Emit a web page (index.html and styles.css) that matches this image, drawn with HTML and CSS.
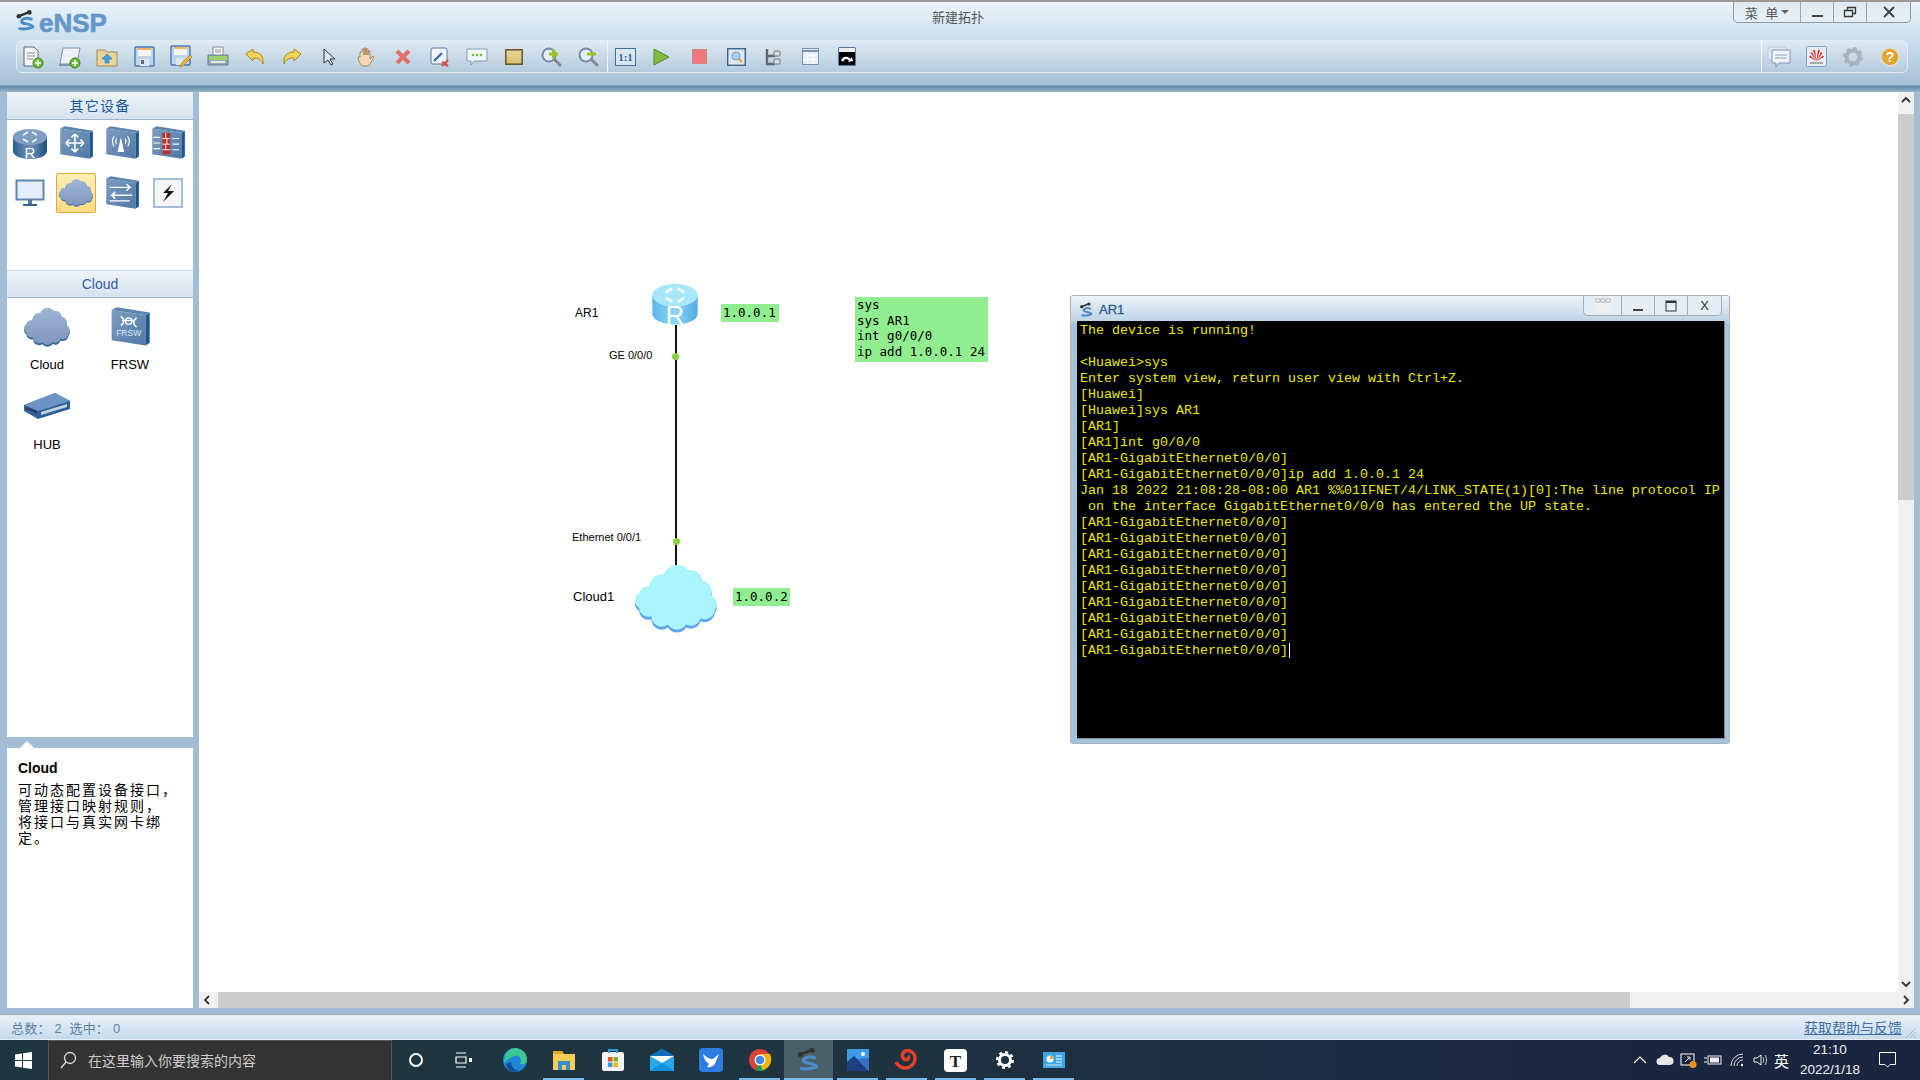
FILE: index.html
```html
<!DOCTYPE html>
<html lang="zh-CN">
<head>
    <meta charset="UTF-8">
    <title>eNSP</title>
    <link rel="stylesheet" href="styles.css">
</head>
<body>
    <svg class="defs" width="0" height="0">
        <defs>
            <linearGradient id="g-body" x1="0" x2="1" y1="0" y2="0"><stop offset="0" stop-color="#2c5f92"/><stop offset=".5" stop-color="#6f93ba"/><stop offset="1" stop-color="#1f4f80"/></linearGradient>
            <linearGradient id="g-face" x1="0" x2="1" y1="0" y2="1"><stop offset="0" stop-color="#7d9cc0"/><stop offset="1" stop-color="#4f79a6"/></linearGradient>
            <linearGradient id="g-cyan" x1="0" x2="1" y1="0" y2="0"><stop offset="0" stop-color="#5fb6ea"/><stop offset=".5" stop-color="#8cd6f8"/><stop offset="1" stop-color="#52abe4"/></linearGradient>
            <linearGradient id="g-cloud" x1="0" x2="0" y1="0" y2="1"><stop offset="0" stop-color="#9fb6d6"/><stop offset="1" stop-color="#7f97bd"/></linearGradient>
            <symbol id="cloud-shape" viewBox="0 0 84 70" preserveAspectRatio="none">
                <path d="M16 24a12 12 0 0 1 14-12a14 14 0 0 1 24-4a12 12 0 0 1 14 10a10 10 0 0 1 8 14a9 9 0 0 1 4 14a10 10 0 0 1-14 8a10 10 0 0 1-14 6a11 11 0 0 1-18 0a10 10 0 0 1-16-8a9 9 0 0 1-12-8a8 8 0 0 1 0-14a8 8 0 0 1 10-6z"/>
            </symbol>
            <symbol id="router-blue" viewBox="0 0 36 32">
                <path d="M1 9v14c0 5 8 8 17 8s17-3 17-8V9z" fill="url(#g-body)"/>
                <ellipse cx="18" cy="9" rx="17" ry="8" fill="#7f9ec2"/>
                <path d="M11 7l5-3M20 4l5 3M25 11l-5 3M16 14l-5-3" stroke="#e8eff6" stroke-width="2"/>
                <text x="18" y="30" font-size="15" text-anchor="middle" fill="#fff" font-family="Liberation Sans">R</text>
            </symbol>
            <symbol id="router-cyan" viewBox="0 0 36 32">
                <path d="M1 9v14c0 5 8 8 17 8s17-3 17-8V9z" fill="url(#g-cyan)"/>
                <ellipse cx="18" cy="9" rx="17" ry="8.5" fill="#a8e6fc"/>
                <path d="M11 7l5-3M20 4l5 3M25 11l-5 3M16 14l-5-3" stroke="#eefbff" stroke-width="2"/>
                <text x="18" y="31" font-size="19" text-anchor="middle" fill="#fff" font-family="Liberation Sans">R</text>
            </symbol>
            <symbol id="box" viewBox="0 0 32 32">
                <path d="M2 3l26 4v23L2 26z" fill="url(#g-face)"/>
                <path d="M28 7l3-2v23l-3 2z" fill="#1d5590"/>
                <path d="M2 3l4-2 25 4-3 2z" fill="#5d85ae"/>
            </symbol>
            <symbol id="ensp-logo" viewBox="0 0 24 24">
                <path d="M4 7l10-4" stroke="#333" stroke-width="2.5" stroke-linecap="round"/>
                <circle cx="4" cy="7" r="2.4" fill="#333"/><circle cx="15" cy="3" r="2.4" fill="#333"/>
                <path d="M17 10c-5-2-11 0-10 3s9 1 10 4-7 4-12 3" fill="none" stroke="#4d8ccb" stroke-width="3" stroke-linecap="round"/>
                <circle cx="18" cy="18" r="2.2" fill="#4d8ccb"/>
            </symbol>
        </defs>
    </svg>

    <div class="app">
        <header class="head">
            <div class="titlebar">
                <div class="brand">
                    <svg class="brand-icon"><use href="#ensp-logo"/></svg>
                    <span class="brand-name">eNSP</span>
                </div>
                <div class="title">新建拓扑</div>
                <div class="winbtns">
                    <div class="winbtn menu">菜 单<i class="caret"></i></div>
                    <div class="winbtn"><svg width="16" height="16"><path d="M3 12h11" stroke="#444" stroke-width="2"/></svg></div>
                    <div class="winbtn"><svg width="16" height="16"><path d="M2.5 6.5h8v6h-8zM5.5 6V3.5h8v6H11" fill="none" stroke="#333" stroke-width="1.3"/></svg></div>
                    <div class="winbtn last"><svg width="16" height="16"><path d="M3 3l10 10M13 3L3 13" stroke="#444" stroke-width="2"/></svg></div>
                </div>
            </div>
            <div class="toolbar">
                <div class="tools">
                    <div class="tool"><svg width="24" height="24"><path d="M3 2h10l4 4v15H3z" fill="#f4f4f4" stroke="#5c6f80"/><path d="M6 8h8M6 11h8M6 14h6" stroke="#889"/><circle cx="17" cy="18" r="5" fill="#6dbb3c" stroke="#3f7f1e"/><path d="M14 18h6M17 15v6" stroke="#fff" stroke-width="1.5"/></svg></div>
                    <div class="tool"><svg width="24" height="24"><path d="M5 3h17l-3 16H2z" fill="#eef2f6" stroke="#7a95ad"/><path d="M1 20h15" stroke="#7a95ad" stroke-width="2"/><circle cx="17" cy="18" r="5" fill="#6dbb3c" stroke="#3f7f1e"/><path d="M14 18h6M17 15v6" stroke="#fff" stroke-width="1.5"/></svg></div>
                    <div class="tool"><svg width="22" height="22"><path d="M1 4h8l2 2h10v14H1z" fill="#e7d59c" stroke="#a08c58"/><path d="M11 8l5 5h-3v4H9v-4H6z" fill="#4a9be0" stroke="#2a6fb0" stroke-width=".6"/></svg></div>
                    <div class="tool"><svg width="21" height="21"><rect x="1" y="1" width="19" height="19" rx="1" fill="#bcd4ec" stroke="#4c7bb0" stroke-width="1.4"/><rect x="4" y="2" width="13" height="8" fill="#f4f4f4"/><rect x="4" y="2" width="13" height="2" fill="#f5b45a"/><rect x="6" y="13" width="9" height="7" fill="#dfe6ee"/><rect x="7" y="14" width="3" height="4" fill="#667"/></svg></div>
                    <div class="tool"><svg width="23" height="23"><rect x="1" y="1" width="19" height="19" rx="1" fill="#bcd4ec" stroke="#4c7bb0" stroke-width="1.4"/><rect x="4" y="2" width="13" height="8" fill="#f4f4f4"/><rect x="4" y="2" width="13" height="2" fill="#f5b45a"/><rect x="6" y="13" width="7" height="7" fill="#dfe6ee"/><path d="M11 19l9-9 2 2-9 9-3 1z" fill="#f2b33d" stroke="#a0701c" stroke-width=".6"/></svg></div>
                    <div class="tool"><svg width="22" height="22"><path d="M6 1h10v9H6z" fill="#f6f6f6" stroke="#8a8a8a"/><path d="M8 4h6M8 6h6" stroke="#999"/><path d="M1 9h20v10H1z" fill="#8fa8b8" stroke="#6a7e8c"/><path d="M2 10h18v4H2z" fill="#9bd46c"/><path d="M4 16h14" stroke="#fff" stroke-width="1.5"/></svg></div>
                    <div class="tool"><svg width="20" height="20"><path d="M1 7l7-5v3c7 0 11 4 10 12-2-5-5-6-10-6v3z" fill="#f0d45a" stroke="#a8871c"/></svg></div>
                    <div class="tool"><svg width="20" height="20"><path d="M19 7l-7-5v3C5 5 1 9 2 17c2-5 5-6 10-6v3z" fill="#f0d45a" stroke="#a8871c"/></svg></div>
                    <div class="tool"><svg width="14" height="20"><path d="M2 2v14l4-3 3 5 2-1-3-5h5z" fill="#dfe6ec" stroke="#333"/></svg></div>
                    <div class="tool"><svg width="20" height="21"><path d="M4 11V6h2V3h2v6V2h2v7V3h2v6V5h2v8l3-3 1 1-4 7c-1 2-3 2-5 2-4 0-6-3-7-9z" fill="#f3d7b4" stroke="#9a7248" stroke-width=".8"/></svg></div>
                    <div class="tool"><svg width="16" height="16"><path d="M2 2l12 12M14 2L2 14" stroke="#e2706a" stroke-width="4"/></svg></div>
                    <div class="tool"><svg width="20" height="20"><rect x="1" y="1" width="16" height="16" rx="2" fill="#f0f4f8" stroke="#5f7a96"/><path d="M4 14l8-8" stroke="#3f6ea8" stroke-width="2.4"/><path d="M12 15l6 4M18 13l-6 6" stroke="#d4504a" stroke-width="2.4"/></svg></div>
                    <div class="tool"><svg width="22" height="20"><path d="M1 2h20v12H8l-3 4v-4H1z" fill="#f3f7fa" stroke="#7f9cb8"/><circle cx="7" cy="8" r="1.3" fill="#7cb742"/><circle cx="11" cy="8" r="1.3" fill="#7cb742"/><circle cx="15" cy="8" r="1.3" fill="#7cb742"/></svg></div>
                    <div class="tool"><svg width="18" height="16"><defs><linearGradient id="g-rect" x1="0" x2="0" y1="0" y2="1"><stop offset="0" stop-color="#e8d79a"/><stop offset="1" stop-color="#d6c070"/></linearGradient></defs><rect x=".8" y=".8" width="16.4" height="14.4" fill="url(#g-rect)" stroke="#6b5a30" stroke-width="1.6"/></svg></div>
                    <div class="tool"><svg width="22" height="22"><circle cx="9" cy="9" r="6.5" fill="#e7eef5" stroke="#6f8bad" stroke-width="2"/><path d="M14 13l7 7" stroke="#888" stroke-width="3"/><path d="M9 8h9M13.5 3.5v9" stroke="#9ac31c" stroke-width="3"/></svg></div>
                    <div class="tool"><svg width="22" height="22"><circle cx="9" cy="9" r="6.5" fill="#e7eef5" stroke="#6f8bad" stroke-width="2"/><path d="M14 13l7 7" stroke="#888" stroke-width="3"/><path d="M10 8h9" stroke="#9ac31c" stroke-width="3"/></svg></div>
                </div>
                <div class="tools tools-run">
                    <div class="tool"><svg width="21" height="18"><rect x=".5" y=".5" width="20" height="17" fill="#dbe6f0" stroke="#3f6ea8"/><text x="10.5" y="13" font-size="11" font-weight="bold" text-anchor="middle" fill="#2f5f9a" font-family="Liberation Serif">1:1</text></svg></div>
                    <div class="tool"><svg width="18" height="18"><path d="M1 1l15 8-15 8z" fill="#86bb45" stroke="#4f8a22"/></svg></div>
                    <div class="tool"><svg width="15" height="15"><rect x=".5" y=".5" width="14" height="14" fill="#f0777a" stroke="#c98a8a"/></svg></div>
                    <div class="tool"><svg width="19" height="18"><rect x=".7" y=".7" width="17.6" height="16.6" fill="#dde6ee" stroke="#39628f" stroke-width="1.4"/><circle cx="9" cy="8" r="4" fill="#a8d0f0" stroke="#7f9cb8"/><path d="M12 11l3 3" stroke="#d8a030" stroke-width="2"/></svg></div>
                    <div class="tool"><svg width="16" height="18"><path d="M2 1v15h8M2 8h8" fill="none" stroke="#666" stroke-width="2.4"/><rect x="9" y="3" width="6" height="5" rx="1" fill="#d6dfe6" stroke="#777"/><rect x="9" y="11" width="6" height="5" rx="1" fill="#d6dfe6" stroke="#777"/></svg></div>
                    <div class="tool"><svg width="17" height="17"><rect x=".5" y=".5" width="16" height="16" fill="#e8eff6" stroke="#7592b2"/><path d="M1 3h15" stroke="#7592b2" stroke-width="2"/><path d="M1 7.5h15M1 11.5h15M5.5 4v12M11 4v12" stroke="#fff"/></svg></div>
                    <div class="tool"><svg width="18" height="19"><rect x=".5" y=".5" width="17" height="18" rx="1" fill="#000" stroke="#4f7aa8"/><rect x="1" y="1" width="16" height="4" fill="#eee"/><path d="M4 14c2-4 6-4 8-1" stroke="#fff" stroke-width="2.4" fill="none"/><path d="M10 15l5-1-1-4z" fill="#fff"/></svg></div>
                </div>
                <div class="spacer"></div>
                <div class="tools tools-right">
                    <div class="tool"><svg width="24" height="22"><rect x="1" y="1" width="18" height="13" rx="2" fill="#dde8f2" stroke="#b8cadb"/><path d="M5 4h18v13H12l-3 4v-4H5z" fill="#eef4f9" stroke="#7f9ab6"/><path d="M8 9h12M8 12h12" stroke="#8fa9c2"/></svg></div>
                    <div class="tool"><svg width="21" height="21"><rect x=".5" y=".5" width="20" height="20" rx="1" fill="#e6edf4" stroke="#7fa0c2"/><path d="M10.5 15L7 4h2zM10.5 15l-6-8 1.5-1zM10.5 15L3 11l1-1.5zM10.5 15l3.5-11h-2zM10.5 15l6-8-1.5-1zM10.5 15l7.5-4-1-1.5z" fill="#d62a20"/><path d="M4 17h13" stroke="#666"/></svg></div>
                    <div class="tool"><svg width="20" height="20"><circle cx="10" cy="10" r="6.5" fill="none" stroke="#aab4bc" stroke-width="4"/><circle cx="10" cy="10" r="8.8" fill="none" stroke="#aab4bc" stroke-width="2.4" stroke-dasharray="3.5 3.4"/></svg></div>
                    <div class="tool"><svg width="20" height="20"><circle cx="10" cy="10" r="9" fill="#e3a72f" stroke="#d8dfe4" stroke-width="1.6"/><text x="10" y="15" font-size="14" font-weight="bold" text-anchor="middle" fill="#fff" font-family="Liberation Sans">?</text></svg></div>
                </div>
            </div>
        </header>

        <main class="main">
            <aside class="side">
                <section class="panel panel-devices">
                    <h3 class="panel-head panel-head-cn">其它设备</h3>
                    <div class="dev-grid">
                        <div class="dev dev-router"><svg width="36" height="32"><use href="#router-blue"/></svg></div>
                        <div class="dev"><svg class="dev-box" viewBox="0 0 32 32"><use href="#box"/><path d="M15 9v14M8 16h14M15 8l-3 3M15 8l3 3M15 24l-3-3M15 24l3-3M7 16l3-3M7 16l3 3M23 16l-3-3M23 16l-3 3" stroke="#fff" stroke-width="1.4" fill="none"/></svg></div>
                        <div class="dev"><svg class="dev-box" viewBox="0 0 32 32"><use href="#box"/><path d="M15 11l-3 13h6z" fill="#fff"/><path d="M9 10c-2 3-2 6 0 9M21 10c2 3 2 6 0 9M11 12c-1 2-1 3 0 5M19 12c1 2 1 3 0 5" stroke="#fff" fill="none"/></svg></div>
                        <div class="dev"><svg class="dev-box" viewBox="0 0 32 32"><use href="#box"/><rect x="11" y="7" width="7" height="19" fill="#b8332f"/><path d="M11 12h7M11 17h7M11 22h7M14 7v5M15 12v5M14 17v5" stroke="#fff" stroke-width=".8"/><path d="M3 11h6M3 16h6M3 21h6M20 12h6M20 17h6M20 22h6" stroke="#fff"/></svg></div>
                        <div class="dev"><svg width="30" height="28"><rect x="1.5" y="1.5" width="27" height="19" fill="#e4edf8" stroke="#5f86ae" stroke-width="2"/><path d="M15 21v4" stroke="#4f7aa8" stroke-width="4"/><path d="M8 26h14" stroke="#35618f" stroke-width="2"/></svg></div>
                        <div class="dev dev-on"><svg width="36" height="30"><use href="#cloud-shape" class="shade" y="1"/><use href="#cloud-shape" class="cloud-fill"/></svg></div>
                        <div class="dev"><svg class="dev-box" viewBox="0 0 32 32"><use href="#box"/><path d="M5 11h18l-3-3M23 11l-3 3M25 18H7l3-3M7 18l3 3M5 23h18" stroke="#fff" stroke-width="1.3" fill="none"/></svg></div>
                        <div class="dev"><svg width="30" height="30"><rect x="1" y="1" width="28" height="28" fill="#f4f5f6" stroke="#a5bdd6" stroke-width="2"/><path d="M19 6l-9 9h5l-5 9 11-11h-6z" fill="#111"/></svg></div>
                    </div>
                    <h3 class="panel-head">Cloud</h3>
                    <div class="item-grid">
                        <div class="item"><svg class="item-icon" width="48" height="40"><use href="#cloud-shape" class="shade" y="2"/><use href="#cloud-shape" class="cloud-fill"/></svg><span>Cloud</span></div>
                        <div class="item"><svg class="item-icon" width="44" height="42" viewBox="0 0 32 32"><use href="#box"/><path d="M9 8c3 2 3 5 0 7M21 9c-3 2-3 5 0 7M10 11h10" stroke="#fff" fill="none" stroke-width="1.2"/><circle cx="15" cy="11.5" r="2.5" fill="none" stroke="#fff"/><text x="15" y="23" font-size="6.5" text-anchor="middle" fill="#dfe8f2" font-family="Liberation Sans">FRSW</text></svg><span>FRSW</span></div>
                        <div class="item item-hub"><svg class="item-icon" width="48" height="30"><path d="M1 14L32 2l15 8v8L15 28 1 20z" fill="#2f6097"/><path d="M1 14L32 2l15 8-32 10z" fill="#6b94c4"/><path d="M3 16l11 4v2L3 18z" fill="#22384f"/><path d="M18 21l26-8v3l-26 8z" fill="#c4d2e0"/></svg><span>HUB</span></div>
                    </div>
                </section>
                <section class="panel panel-info">
                    <i class="info-notch"></i>
                    <b class="info-title">Cloud</b>
                    <p class="info-text">可动态配置设备接口，<br>管理接口映射规则，<br>将接口与真实网卡绑<br>定。</p>
                </section>
            </aside>

            <div class="workspace">
                <div class="workspace-row">
                    <div class="canvas">
                        <svg class="node node-router"><use href="#router-cyan"/></svg>
                        <i class="link"></i>
                        <i class="port port-a"></i>
                        <i class="port port-b"></i>
                        <svg class="node node-cloud"><use href="#cloud-shape" class="shade-cyan" y="3"/><use href="#cloud-shape" class="cyan-fill"/></svg>
                        <span class="tag tag-ar1">AR1</span>
                        <span class="tag tag-ge">GE 0/0/0</span>
                        <span class="tag tag-eth">Ethernet 0/0/1</span>
                        <span class="tag tag-cloud">Cloud1</span>
                        <div class="note note-ip1">1.0.0.1</div>
                        <div class="note note-ip2">1.0.0.2</div>
                        <div class="note note-cmds">sys
sys AR1
int g0/0/0
ip add 1.0.0.1 24</div>

                        <div class="console">
                            <div class="console-bar">
                                <svg class="console-logo"><use href="#ensp-logo"/></svg>
                                <span class="console-title">AR1</span>
                                <div class="console-btns">
                                    <div class="cbtn cbtn-wide"><svg width="18" height="16"><rect x="1" y="0" width="16" height="14" fill="#eee"/><path d="M2 1h4v3H2zM7 1h4v3H7zM12 1h4v3h-4z" fill="#fff" stroke="#999" stroke-width=".7"/></svg></div>
                                    <div class="cbtn"><svg width="12" height="12"><path d="M1 10h10" stroke="#444" stroke-width="2"/></svg></div>
                                    <div class="cbtn"><svg width="12" height="12"><rect x="1" y="1" width="10" height="10" fill="none" stroke="#333"/><path d="M1 2h10" stroke="#333" stroke-width="2"/></svg></div>
                                    <div class="cbtn cbtn-x">X</div>
                                </div>
                            </div>
                            <pre class="terminal">The device is running!

&lt;Huawei&gt;sys
Enter system view, return user view with Ctrl+Z.
[Huawei]
[Huawei]sys AR1
[AR1]
[AR1]int g0/0/0
[AR1-GigabitEthernet0/0/0]
[AR1-GigabitEthernet0/0/0]ip add 1.0.0.1 24
Jan 18 2022 21:08:28-08:00 AR1 %%01IFNET/4/LINK_STATE(1)[0]:The line protocol IP
 on the interface GigabitEthernet0/0/0 has entered the UP state.
[AR1-GigabitEthernet0/0/0]
[AR1-GigabitEthernet0/0/0]
[AR1-GigabitEthernet0/0/0]
[AR1-GigabitEthernet0/0/0]
[AR1-GigabitEthernet0/0/0]
[AR1-GigabitEthernet0/0/0]
[AR1-GigabitEthernet0/0/0]
[AR1-GigabitEthernet0/0/0]
[AR1-GigabitEthernet0/0/0]<i class="cursor"></i></pre>
                        </div>
                    </div>
                    <div class="vscroll">
                        <div class="sb-btn"><svg width="10" height="8"><path d="M1 6l4-4 4 4" fill="none" stroke="#333" stroke-width="1.8"/></svg></div>
                        <div class="vthumb"></div>
                        <div class="sb-fill"></div>
                        <div class="sb-btn"><svg width="10" height="8"><path d="M1 2l4 4 4-4" fill="none" stroke="#333" stroke-width="1.8"/></svg></div>
                    </div>
                </div>
                <div class="hscroll">
                    <div class="sb-btn"><svg width="8" height="10"><path d="M6 1L2 5l4 4" fill="none" stroke="#333" stroke-width="1.8"/></svg></div>
                    <div class="hthumb"></div>
                    <div class="sb-fill"></div>
                    <div class="sb-btn"><svg width="8" height="10"><path d="M2 1l4 4-4 4" fill="none" stroke="#333" stroke-width="1.8"/></svg></div>
                </div>
            </div>
        </main>

        <footer class="status">
            <span class="status-count">总数： 2  选中： 0</span>
            <a class="status-link">获取帮助与反馈</a>
            <svg class="grip" width="12" height="12"><path d="M11 1L1 11M11 5l-6 6M11 9l-2 2" stroke="#a8b8c4"/></svg>
        </footer>
    </div>

    <div class="taskbar">
        <div class="start"><svg width="17" height="17"><path d="M0 2.5l7-1V8H0zM8 1.3L17 0v8H8zM0 9h7v6.5l-7-1zM8 9h9v8l-9-1.3z" fill="#fff"/></svg></div>
        <div class="search">
            <svg width="18" height="18"><circle cx="11" cy="7" r="5.5" fill="none" stroke="#ddd" stroke-width="1.3"/><path d="M7 11l-5 6" stroke="#ddd" stroke-width="1.3"/></svg>
            <span>在这里输入你要搜索的内容</span>
        </div>
        <div class="sys-btn"><svg width="16" height="16"><circle cx="8" cy="8" r="6" fill="none" stroke="#fff" stroke-width="2"/></svg></div>
        <div class="sys-btn"><svg width="18" height="18"><path d="M1 2h10M1 16h10M1 6h10v6H1z" fill="none" stroke="#fff" stroke-width="1.2"/><rect x="14" y="7" width="3" height="4" fill="#fff"/></svg></div>
        <div class="apps">
            <div class="app-btn"><svg width="26" height="26"><circle cx="13" cy="13" r="12" fill="#1f87d8"/><path d="M13 1a12 12 0 0 1 12 12c0 4-4 5-7 4 3-5-1-9-5-8-3 0-7 3-11 7C2 7 7 1 13 1z" fill="#3cc690"/><path d="M4 17c0 6 8 9 14 7-5 0-9-4-9-9z" fill="#124a96"/></svg></div>
            <div class="app-btn app-run"><svg width="24" height="22"><path d="M1 2h9l2 3h11v16H1z" fill="#f7cd58"/><path d="M1 2h9l2 3H1z" fill="#e3a52c"/><rect x="6" y="12" width="12" height="9" fill="#3a8ad0"/><rect x="10" y="16" width="4" height="5" fill="#f7cd58"/></svg></div>
            <div class="app-btn"><svg width="24" height="24"><rect x="1" y="4" width="22" height="19" rx="2" fill="#f4f4f4"/><path d="M8 5V2h8v3" fill="none" stroke="#2f9fdc" stroke-width="2"/><rect x="7" y="9" width="4.5" height="4.5" fill="#e8502c"/><rect x="12.5" y="9" width="4.5" height="4.5" fill="#7db82c"/><rect x="7" y="14.5" width="4.5" height="4.5" fill="#2f9fdc"/><rect x="12.5" y="14.5" width="4.5" height="4.5" fill="#f4b400"/></svg></div>
            <div class="app-btn"><svg width="24" height="24"><path d="M0 8L12 1l12 7v15H0z" fill="#28a8ea"/><path d="M0 8L12 1l12 7-12 7z" fill="#0f6cbd"/><path d="M0 8h24L12 15z" fill="#fff"/><path d="M0 23l12-8 12 8z" fill="#1490df"/></svg></div>
            <div class="app-btn"><svg width="24" height="24"><rect width="24" height="24" rx="4" fill="#2f7de1"/><path d="M4 6c4 4 7 5 10 5l6-5-3 7c-1 5-6 7-9 6l2-3c-3-2-5-5-6-10z" fill="#fff"/></svg></div>
            <div class="app-btn app-run"><svg width="24" height="24"><circle cx="12" cy="12" r="11" fill="#db4437"/><path d="M12 12L22 17A11 11 0 0 1 8 22z" fill="#0f9d58"/><path d="M12 6h10a11 11 0 0 1-8 16z" fill="#f4b400"/><circle cx="12" cy="12" r="5.5" fill="#fff"/><circle cx="12" cy="12" r="4.3" fill="#4285f4"/></svg></div>
            <div class="app-btn app-run app-active"><svg width="26" height="26"><use href="#ensp-logo"/></svg></div>
            <div class="app-btn app-run"><svg width="24" height="24"><rect x="1" y="1" width="22" height="22" fill="#3d9be8"/><circle cx="17" cy="6" r="2" fill="#fff"/><path d="M1 23V14l7-6 15 15z" fill="#1c3f80"/><path d="M11 11l12-1v13z" fill="#3a62b8" opacity=".8"/></svg></div>
            <div class="app-btn app-run"><svg width="24" height="22"><path d="M1 13c3 6 10 8 15 4s6-12-1-15c-6-2-10 4-6 8 3 2 6-1 4-3" fill="none" stroke="#e4402c" stroke-width="3.5"/></svg></div>
            <div class="app-btn app-run"><svg width="23" height="23"><rect width="23" height="23" rx="4" fill="#fff"/><text x="11.5" y="18" font-size="17" font-weight="bold" text-anchor="middle" fill="#222" font-family="Liberation Serif">T</text></svg></div>
            <div class="app-btn app-run"><svg width="18" height="18"><circle cx="9" cy="9" r="5.5" fill="none" stroke="#fff" stroke-width="3"/><circle cx="9" cy="9" r="7.8" fill="none" stroke="#fff" stroke-width="2.4" stroke-dasharray="3 3.1"/></svg></div>
            <div class="app-btn app-run"><svg width="22" height="16"><rect width="22" height="16" fill="#3ea5e6"/><circle cx="7" cy="7" r="3.5" fill="#fff"/><path d="M7 7V3.5A3.5 3.5 0 0 1 10.5 7z" fill="#f2a53a"/><path d="M13 4h6M13 7h6M13 10h6" stroke="#fff"/><path d="M3 13h16" stroke="#cfe8f8"/></svg></div>
        </div>
        <div class="tray">
            <svg class="tray-up" width="14" height="10"><path d="M1 8l6-6 6 6" fill="none" stroke="#fff" stroke-width="1.2"/></svg>
            <svg class="tray-cloud" width="18" height="12"><path d="M4 11a3.5 3.5 0 0 1 0-7 5 5 0 0 1 9-1 4 4 0 0 1 1 8z" fill="#e6e6e6"/></svg>
            <svg class="tray-sync" width="18" height="18"><rect x="1" y="3" width="13" height="11" fill="none" stroke="#eee" stroke-width="1.1"/><path d="M5 11l5-5M7 6h3v3" fill="none" stroke="#eee"/><circle cx="13" cy="13.5" r="3.5" fill="#f5901e"/></svg>
            <svg class="tray-batt" width="18" height="12"><rect x="4" y="2" width="13" height="8" fill="none" stroke="#eee"/><rect x="6" y="3.5" width="9" height="5" fill="#eee"/><path d="M0 4h3M0 8h3" stroke="#eee"/></svg>
            <svg class="tray-wifi" width="14" height="14"><path d="M1 13a12 12 0 0 1 12-12M4 13a9 9 0 0 1 9-9M7 13a6 6 0 0 1 6-6" fill="none" stroke="#ddd"/><circle cx="12" cy="12" r="1.2" fill="#fff"/></svg>
            <svg class="tray-vol" width="16" height="14"><path d="M1 5h3l4-3v10L4 9H1z" fill="none" stroke="#eee"/><path d="M10 4c1 2 1 4 0 6M12 2c2 3 2 7 0 10" fill="none" stroke="#ccc"/></svg>
            <span class="tray-ime">英</span>
            <div class="clock"><span>21:10</span><span>2022/1/18</span></div>
            <svg class="tray-note" width="18" height="16"><path d="M.5.5h16v12H11L8.5 15 6 12.5H.5z" fill="none" stroke="#fff"/></svg>
        </div>
    </div>
</body>
</html>
```

FILE: styles.css
```css
* {
    box-sizing: border-box;
}
html, body {
    margin: 0;
    padding: 0;
    width: 1920px;
    height: 1080px;
    overflow: hidden;
}
body {
    display: flex;
    flex-direction: column;
    font-family: "Liberation Sans", "Noto Sans CJK SC", sans-serif;
    font-size: 12px;
    color: #000;
    background: #1e3640;
}
.defs {
    position: absolute;
}
.app {
    height: 1040px;
    display: flex;
    flex-direction: column;
    background: #a3bdd5;
}

/* title bar and toolbar */
.head {
    height: 92px;
    flex: none;
    border-top: 2px solid #9a9a9a;
    background: linear-gradient(#e9f4fa, #c9dded 40px, #a5c1d8 83px, #5f88a7 84px, #9fbad2 91px);
}
.titlebar {
    height: 38px;
    display: flex;
    position: relative;
}
.brand {
    display: flex;
    align-items: flex-start;
    padding: 7px 0 0 15px;
}
.brand-icon {
    width: 23px;
    height: 24px;
}
.brand-name {
    margin-left: 1px;
    font-size: 26px;
    line-height: 28px;
    font-weight: bold;
    color: #6596c8;
    -webkit-text-stroke: .6px #6596c8;
}
.title {
    position: absolute;
    left: 932px;
    top: 7px;
    font-size: 13px;
    line-height: 18px;
    color: #555;
}
.winbtns {
    margin-left: auto;
    margin-right: 9px;
    height: 21px;
    display: flex;
    border: 1px solid #8f9aa3;
    border-top: none;
    border-radius: 0 0 5px 5px;
    background: linear-gradient(#dfeaf2, #e6eff5);
}
.winbtn {
    width: 33px;
    display: flex;
    align-items: center;
    justify-content: center;
    border-right: 1px solid #9aa5ad;
}
.winbtn.last {
    width: 43px;
    border-right: none;
}
.winbtn.menu {
    width: 67px;
    font-size: 13px;
    color: #555;
    word-spacing: 4px;
}
.caret {
    margin-left: 3px;
    border: 4px solid transparent;
    border-top: 4px solid #666;
    border-bottom: none;
}
.toolbar {
    height: 33px;
    margin: 0 12px 0 16px;
    display: flex;
    border: 1px solid #e2edf4;
    border-radius: 6px;
    background: linear-gradient(#deeaf3, #b4cbdd);
}
.tools {
    display: flex;
    gap: 5px;
}
.tools-run {
    margin-left: 3px;
    padding-left: 1px;
    border-left: 1px solid #eef4f8;
}
.tools-right {
    padding-left: 1px;
    margin-right: 1px;
    border-left: 1px solid #eef4f8;
}
.tool {
    width: 32px;
    display: flex;
    align-items: center;
    justify-content: center;
}
.spacer {
    flex: 1;
}

/* main area */
.main {
    flex: 1;
    display: flex;
    gap: 6px;
    padding: 0 6px 6px 7px;
    min-height: 0;
}
.side {
    width: 186px;
    flex: none;
    display: flex;
    flex-direction: column;
    gap: 11px;
}
.panel {
    background: #fff;
    border-radius: 2px 2px 0 0;
}
.panel-devices {
    height: 645px;
    flex: none;
}
.panel-head {
    margin: 0;
    height: 28px;
    line-height: 27px;
    text-align: center;
    font-size: 14px;
    font-weight: normal;
    color: #3a5ea8;
    border-top: 1px solid #c5d5e3;
    border-bottom: 1px solid #9db8cf;
    background: linear-gradient(#eef3f9, #d5e3ef);
}
.panel-head-cn {
    border-top: none;
    line-height: 29px;
    letter-spacing: 1.3px;
    color: #1d5a94;
}
.dev-grid {
    height: 150px;
    padding-top: 3px;
    display: grid;
    grid-template-columns: repeat(4, 46px);
    grid-auto-rows: 40px;
    row-gap: 10px;
    align-content: start;
}
.dev {
    display: flex;
    align-items: center;
    justify-content: center;
}
.dev-router {
    padding-top: 2px;
}
.dev-box {
    width: 36px;
    height: 36px;
    flex: none;
}
.dev-on {
    width: 40px;
    justify-self: center;
    border: 1px solid #e3a83f;
    border-radius: 2px;
    background: linear-gradient(#fdeeb4, #fcdc84);
}
.shade {
    fill: #3a6a9e;
}
.cloud-fill {
    fill: url(#g-cloud);
}
.shade-cyan {
    fill: #63a4ee;
}
.cyan-fill {
    fill: #aaf4fd;
}
.item-grid {
    display: grid;
    grid-template-columns: 80px 86px;
    grid-auto-rows: 80px;
}
.item {
    padding-top: 8px;
    height: 80px;
    display: flex;
    flex-direction: column;
    align-items: center;
}
.item-icon {
    height: 42px;
    flex: none;
}
.item span {
    margin-top: 10px;
    font-size: 13px;
    line-height: 14px;
}
.item-hub .item-icon {
    margin-top: 5px;
    height: 37px;
}
.panel-info {
    flex: 1;
    position: relative;
    padding: 12px 10px 0 11px;
    border-radius: 0;
}
.info-notch {
    position: absolute;
    left: 13px;
    top: -7px;
    border: 7px solid transparent;
    border-bottom-color: #fff;
    border-top: none;
}
.info-title {
    display: block;
    font-size: 14px;
    line-height: 16px;
}
.info-text {
    margin: 6px 0 0;
    font-size: 14px;
    line-height: 16px;
    letter-spacing: 2px;
}

/* topology canvas */
.workspace {
    flex: 1;
    display: flex;
    flex-direction: column;
    min-width: 0;
}
.workspace-row {
    flex: 1;
    display: flex;
    min-height: 0;
}
.canvas {
    flex: 1;
    position: relative;
    background: #fff;
}
.node {
    position: absolute;
}
.node-router {
    left: 452px;
    top: 191px;
    width: 48px;
    height: 43px;
}
.node-cloud {
    left: 434px;
    top: 470px;
    width: 86px;
    height: 73px;
    overflow: visible;
}
.link {
    position: absolute;
    left: 476px;
    top: 233px;
    width: 2px;
    height: 245px;
    background: #111;
}
.port {
    position: absolute;
    width: 7px;
    height: 7px;
    border-radius: 50%;
    background: #86d33c;
}
.port-a {
    left: 473px;
    top: 261px;
}
.port-b {
    left: 474px;
    top: 446px;
}
.tag {
    position: absolute;
    line-height: 14px;
    white-space: nowrap;
}
.tag-ar1 {
    left: 376px;
    top: 214px;
}
.tag-ge {
    left: 410px;
    top: 256px;
    font-size: 11px;
}
.tag-eth {
    left: 373px;
    top: 438px;
    font-size: 11px;
}
.tag-cloud {
    left: 374px;
    top: 498px;
    font-size: 13px;
}
.note {
    position: absolute;
    background: #90ee90;
    font-family: "DejaVu Sans Mono", monospace;
    font-size: 12.5px;
    line-height: 18px;
    padding-left: 2px;
    white-space: pre;
}
.note-ip1 {
    left: 522px;
    top: 212px;
    width: 58px;
    height: 18px;
}
.note-ip2 {
    left: 534px;
    top: 496px;
    width: 57px;
    height: 18px;
}
.note-cmds {
    left: 656px;
    top: 205px;
    width: 133px;
    height: 65px;
    line-height: 15.5px;
}

/* console window */
.console {
    position: absolute;
    left: 871px;
    top: 203px;
    width: 660px;
    height: 449px;
    display: flex;
    flex-direction: column;
    padding: 0 4px 4px 6px;
    border: 1px solid #a9b4bd;
    border-radius: 3px;
    background: linear-gradient(#eef4f9, #bcd3e6 26px, #a6c3dc 27px);
}
.console-bar {
    height: 25px;
    flex: none;
    display: flex;
    align-items: center;
}
.console-logo {
    width: 16px;
    height: 16px;
    margin-top: 2px;
    margin-right: 4px;
    margin-left: 2px;
}
.console-title {
    font-size: 13px;
    color: #2a5a90;
    margin-top: 1px;
    -webkit-text-stroke: .3px #2a5a90;
}
.console-btns {
    margin-left: auto;
    margin-right: 3px;
    margin-bottom: 5px;
    height: 20px;
    display: flex;
    border: 1px solid #a3b0bb;
    border-top: none;
    border-radius: 0 0 5px 5px;
    background: #e4edf4;
}
.cbtn {
    width: 33px;
    display: flex;
    align-items: center;
    justify-content: center;
    border-right: 1px solid #a3b0bb;
}
.cbtn-wide {
    width: 38px;
}
.cbtn-x {
    border-right: none;
    font-size: 13px;
    color: #333;
}
.terminal {
    flex: 1;
    margin: 0;
    padding: 2px 0 0 3px;
    background: #000;
    border: 1px solid #888;
    border-width: 0 1px 1px 0;
    color: #e9e900;
    font-family: "Liberation Mono", monospace;
    font-size: 13.33px;
    line-height: 16px;
    overflow: hidden;
}
.cursor {
    display: inline-block;
    width: 1px;
    height: 15px;
    margin-left: 1px;
    vertical-align: top;
    background: #fff;
}

/* scrollbars */
.vscroll {
    width: 16px;
    flex: none;
    display: flex;
    flex-direction: column;
    background: #f0f0f0;
}
.hscroll {
    height: 16px;
    flex: none;
    display: flex;
    background: #f0f0f0;
}
.sb-btn {
    width: 16px;
    height: 16px;
    flex: none;
    display: flex;
    align-items: center;
    justify-content: center;
}
.vthumb {
    height: 386px;
    margin-top: 6px;
    flex: none;
    background: #cdcdcd;
}
.hthumb {
    width: 1412px;
    margin-left: 3px;
    flex: none;
    background: #cdcdcd;
}
.sb-fill {
    flex: 1;
}

/* status bar */
.status {
    height: 26px;
    flex: none;
    display: flex;
    align-items: center;
    padding: 0 3px 0 11px;
    border-top: 1px solid #9aa5ad;
    border-bottom: 1px solid #e8eef3;
    background: linear-gradient(#e8f1f8, #c6dbec);
    font-size: 13px;
    color: #5f82a4;
    white-space: pre;
}
.status-count {
    letter-spacing: .2px;
}
.status-link {
    margin-left: auto;
    font-size: 14px;
    color: #3f6ea5;
    text-decoration: underline;
}
.grip {
    margin-left: 3px;
    align-self: flex-end;
}

/* windows taskbar */
.taskbar {
    height: 40px;
    flex: none;
    display: flex;
    align-items: center;
    background: linear-gradient(90deg, #1e3640, #1f3440 40%, #1a2640 85%);
    color: #fff;
}
.start {
    width: 48px;
    display: flex;
    justify-content: center;
    padding-right: 1px;
}
.search {
    width: 344px;
    height: 40px;
    display: flex;
    align-items: center;
    gap: 11px;
    padding-left: 10px;
    padding-bottom: 1px;
    background: #333;
    border: 1px solid #555;
    border-bottom: none;
    font-size: 14px;
    color: #ccc;
}
.sys-btn {
    width: 48px;
    height: 40px;
    display: flex;
    align-items: center;
    justify-content: center;
}
.apps {
    display: flex;
    margin-left: 2px;
}
.app-btn {
    width: 49px;
    height: 40px;
    display: flex;
    align-items: center;
    justify-content: center;
    position: relative;
}
.app-run::after {
    content: "";
    position: absolute;
    left: 4px;
    right: 4px;
    bottom: 0;
    height: 2px;
    background: #76b9ed;
}
.app-active {
    background: #4a6068;
}
.app-active::after {
    left: 0;
    right: 0;
}
.tray {
    margin-left: auto;
    width: 290px;
    height: 40px;
    display: flex;
    align-items: center;
    padding-left: 3px;
}
.tray-up {
    margin-right: 9px;
}
.tray-cloud {
    margin-right: 6px;
}
.tray-sync {
    margin-right: 6px;
}
.tray-batt {
    margin-right: 8px;
}
.tray-wifi {
    margin-right: 9px;
}
.tray-vol {
    margin-right: 5px;
}
.tray-ime {
    width: 18px;
    font-size: 15px;
}
.clock {
    width: 76px;
    display: flex;
    flex-direction: column;
    align-items: center;
    line-height: 20px;
    font-size: 13.5px;
    color: #f0f0f0;
}
.tray-note {
    margin-left: 11px;
}
```
